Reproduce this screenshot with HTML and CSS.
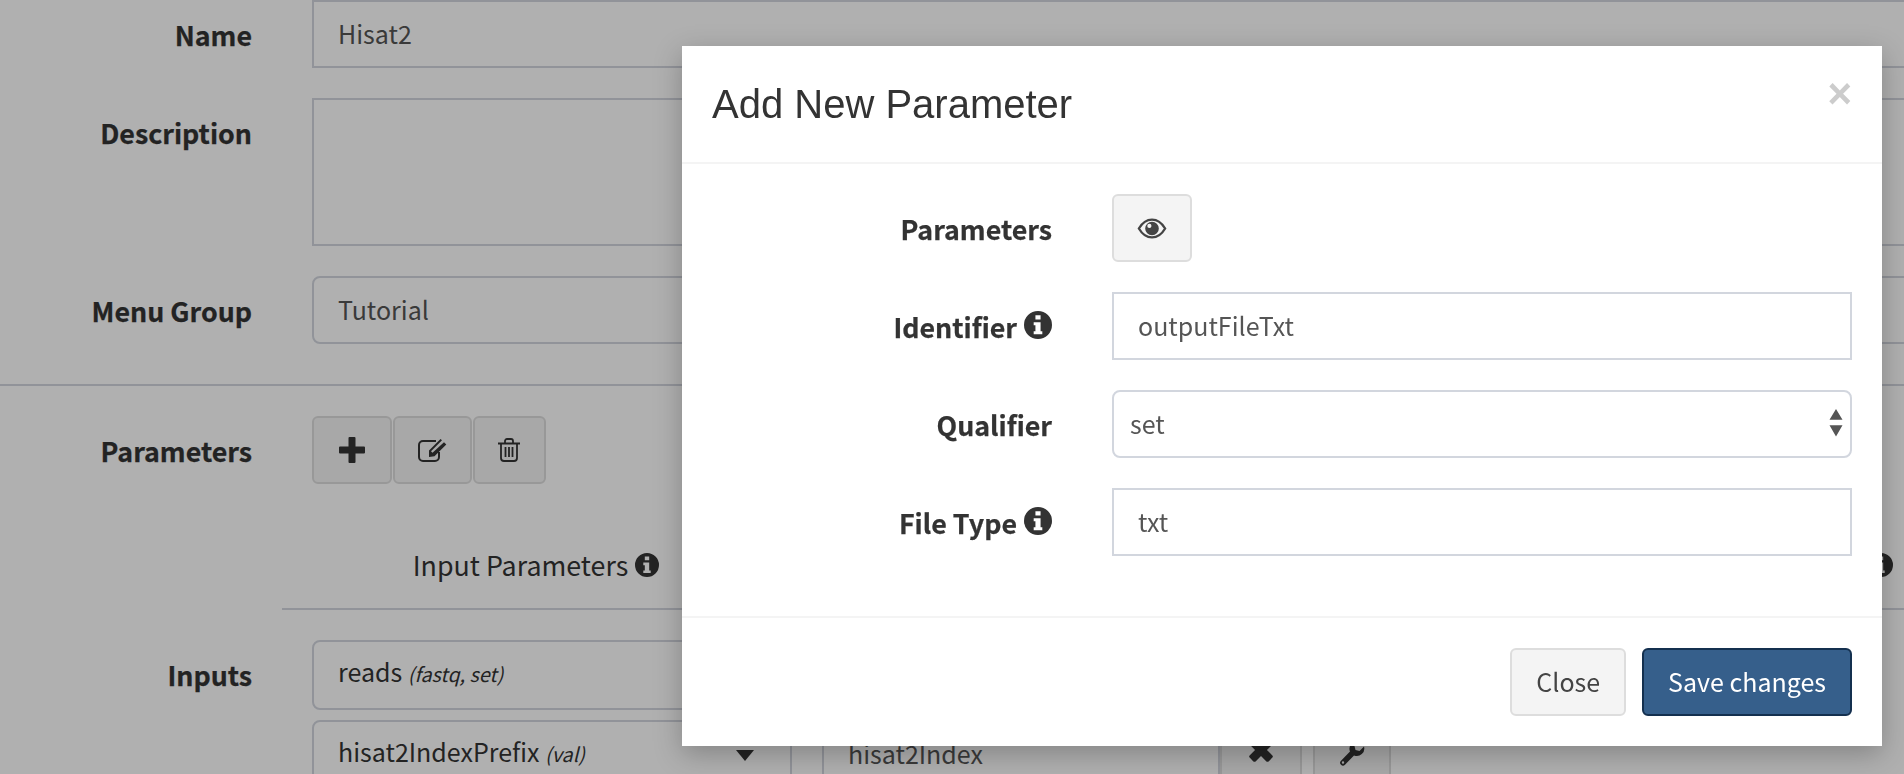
FILE: index.html
```html
<!DOCTYPE html>
<html lang="en">
<head>
<meta charset="utf-8">
<title>Add New Parameter</title>
<link rel="stylesheet" href="styles.css">
</head>
<body>
<svg class="defs" width="0" height="0" aria-hidden="true">
  <symbol id="info" viewBox="0 0 24 24">
    <path fill-rule="evenodd" fill="currentColor" d="M12 0a12 12 0 1 1 0 24a12 12 0 1 1 0-24zM9.800 3.600v3.600h4.400V3.600zM8.300 9.600v2.600h1.500v5.200H8.300V20h7.400v-2.600h-1.500V9.600z"/>
  </symbol>
</svg>

<form class="form">
  <div class="row">
    <label class="label">Name</label>
    <div class="field">Hisat2</div>
  </div>
  <div class="row">
    <label class="label">Description</label>
    <div class="field area"></div>
  </div>
  <div class="row">
    <label class="label">Menu Group</label>
    <div class="field round">Tutorial</div>
  </div>
  <hr class="rule">
  <div class="row">
    <label class="label">Parameters</label>
    <div class="tools">
      <button type="button" class="btn tool-a">
        <svg width="26" height="26" viewBox="0 0 26 26"><path fill="currentColor" d="M10.500 0h5a1 1 0 0 1 1 1v8.500H25a1 1 0 0 1 1 1v5a1 1 0 0 1-1 1h-8.500V25a1 1 0 0 1-1 1h-5a1 1 0 0 1-1-1v-8.500H1a1 1 0 0 1-1-1v-5a1 1 0 0 1 1-1h8.500V1a1 1 0 0 1 1-1z"/></svg>
      </button>
      <button type="button" class="btn tool-b">
        <svg width="29" height="24" viewBox="0 0 29 24"><path fill="none" stroke="currentColor" stroke-width="2" d="M21 14v5a4 4 0 0 1-4 4H5a4 4 0 0 1-4-4V7a4 4 0 0 1 4-4h13"/><path fill="currentColor" d="M11 12.500L22.500 1l1.500 1.300-11 11 1.500 1.500L26 4.300l2.300 2.100L16.500 18.300l-5.500.7z"/></svg>
      </button>
      <button type="button" class="btn tool-c">
        <svg class="trash" width="22" height="24" viewBox="0 0 22 24"><path fill="none" stroke="currentColor" stroke-width="1.800" d="M0 5.500h22M7 5.500V3a2 2 0 0 1 2-2h4a2 2 0 0 1 2 2v2.500M3 5.500V20a3 3 0 0 0 3 3h10a3 3 0 0 0 3-3V5.500M7.500 9v10M11 9v10M14.500 9v10"/></svg>
      </button>
    </div>
  </div>
  <div class="params-head">
    <div class="params-title">Input Parameters <svg class="info-sm"><use href="#info"/></svg></div>
    <div class="params-title out">Output Parameters <svg class="info-sm"><use href="#info"/></svg></div>
  </div>
  <div class="row">
    <label class="label">Inputs</label>
    <div class="io-list">
      <div class="io-row">
        <div class="field round pick">
          <span>reads <small class="hint">(fastq, set)</small></span>
          <i class="caret"></i>
        </div>
      </div>
      <div class="io-row">
        <div class="field round pick">
          <span>hisat2IndexPrefix <small class="hint">(val)</small></span>
          <i class="caret"></i>
        </div>
        <div class="field value">hisat2Index</div>
        <button type="button" class="btn remove">
          <svg class="x-icon" width="26" height="26" viewBox="0 0 24 24"><path fill="currentColor" d="M7 1.500L12 6.500l5-5a1.500 1.500 0 0 1 2 0l3.500 3.500a1.500 1.500 0 0 1 0 2L17.500 12l5 5a1.500 1.500 0 0 1 0 2L19 22.500a1.500 1.500 0 0 1-2 0l-5-5-5 5a1.500 1.500 0 0 1-2 0L1.500 19a1.500 1.500 0 0 1 0-2l5-5-5-5a1.500 1.500 0 0 1 0-2L5 1.500a1.500 1.500 0 0 1 2 0z"/></svg>
        </button>
        <button type="button" class="btn wrench">
          <svg width="26" height="26" viewBox="0 0 26 26"><path fill="currentColor" fill-rule="evenodd" d="M25 5.500a7.500 7.500 0 0 1-10 9L6 23.700a2.800 2.800 0 0 1-4-4L11 10.500a7.500 7.500 0 0 1 9-10L15.500 5l1 4 4 1zM4 20.300a1.200 1.200 0 1 0 0 2.400a1.200 1.200 0 1 0 0-2.400z"/></svg>
        </button>
      </div>
    </div>
  </div>
</form>

<div class="backdrop"></div>

<section class="modal">
  <header class="modal-head">
    <h4 class="modal-title">Add New Parameter</h4>
    <button type="button" class="close">×</button>
  </header>
  <div class="modal-body">
    <div class="m-row">
      <label class="label">Parameters</label>
      <button type="button" class="btn eye">
        <svg width="30" height="21" viewBox="0 0 28 20"><path fill="none" stroke="currentColor" stroke-width="2.200" d="M1.500 10C5 4 9 1.500 14 1.500S23 4 26.500 10C23 16 19 18.500 14 18.500S5 16 1.500 10z"/><path fill="currentColor" fill-rule="evenodd" d="M14 3.500a6.500 6.500 0 1 1 0 13a6.500 6.500 0 1 1 0-13zM11.500 5.500a2 2 0 1 0 0 4a2 2 0 1 0 0-4z"/></svg>
      </button>
    </div>
    <div class="m-row">
      <label class="label">Identifier<svg class="info"><use href="#info"/></svg></label>
      <div class="field">outputFileTxt</div>
    </div>
    <div class="m-row">
      <label class="label">Qualifier</label>
      <div class="field round native">
        <span>set</span>
        <svg width="14" height="28" viewBox="0 0 14 26" preserveAspectRatio="none"><path fill="#555" d="M7 0l6.500 10H.5zM.5 15h13L7 25.500z"/></svg>
      </div>
    </div>
    <div class="m-row">
      <label class="label">File Type<svg class="info"><use href="#info"/></svg></label>
      <div class="field">txt</div>
    </div>
  </div>
  <footer class="modal-foot">
    <button type="button" class="btn">Close</button>
    <button type="button" class="btn primary">Save changes</button>
  </footer>
</section>
</body>
</html>
```
FILE: styles.css
```css
* { box-sizing: border-box; }
html, body { margin: 0; height: 100%; }
body {
  overflow: hidden;
  background: #fff;
  color: #333;
  font: 26.8px/40px "Noto Sans CJK SC", "Noto Sans", sans-serif;
}
.defs { position: absolute; }

.form { width: 1980px; }
.row {
  display: grid;
  grid-template-columns: 252px 1fr;
  column-gap: 60px;
  margin-bottom: 30px;
}
.label {
  display: flex;
  justify-content: flex-end;
  align-items: flex-start;
  gap: 7px;
  padding-top: 14.5px;
  font-weight: 700;
  -webkit-text-stroke: .25px currentColor;
}
.info { width: 28px; height: 28px; margin-top: 4.5px; }
.field {
  display: flex;
  align-items: center;
  height: 68px;
  padding: 0 24px 3px;
  border: 2px solid #d2d6de;
  color: #555;
  background: #fff;
  font-size: 25px;
}
.area { height: 148px; }
.round { border-radius: 8px; }
.rule {
  margin: 40px 0 30px;
  border: 0;
  border-top: 2px solid #d2d6de;
}

.tools { display: flex; gap: 1px; }
.btn {
  display: inline-flex;
  align-items: center;
  justify-content: center;
  height: 68px;
  padding: 0 24px 2px;
  border: 2px solid #ddd;
  border-radius: 6px;
  background: #f4f4f4;
  color: #444;
  font: inherit;
  font-size: 25px;
}
.tools .btn { padding: 0; color: #333; }
.tool-a { width: 80px; }
.tool-b { width: 79px; }
.tool-c { width: 73px; }
.trash { margin-right: 2px; }

.params-head {
  display: flex;
  justify-content: space-between;
  margin: 61px 0 30px 282px;
  padding: 0 0 23px;
  border-bottom: 2px solid #d2d6de;
}
.params-title {
  width: 508px;
  text-align: center;
  white-space: nowrap;
}
.params-title.out { width: auto; padding-right: 87px; }
.info-sm { width: 24px; height: 24px; margin-left: 1px; vertical-align: -1px; }

.io-list { display: flex; flex-direction: column; gap: 10px; }
.io-row { display: flex; align-items: flex-start; }
.pick {
  justify-content: space-between;
  width: 480px;
  height: 70px;
  padding: 0 36px 5px 24px;
  color: #333;
}
.hint { font-size: 19.7px; font-style: italic; }
.caret {
  width: 0;
  height: 0;
  margin-top: 5px;
  border: solid transparent;
  border-width: 11px 9px 0;
  border-top-color: #333;
}
.value { width: 398px; margin-left: 30px; padding-left: 24px; }
.remove { width: 82px; padding: 0; border-radius: 0; color: #333; }
.x-icon { margin-bottom: 8px; }
.wrench { width: 78px; margin-left: 11px; padding: 0; color: #333; }

.backdrop {
  position: fixed;
  inset: 0;
  background: rgba(0, 0, 0, .31);
}
.modal {
  position: absolute;
  left: 682px;
  top: 46px;
  width: 1200px;
  background: #fff;
  box-shadow: 0 8px 26px rgba(0, 0, 0, .25);
}
.modal-head {
  display: flex;
  justify-content: space-between;
  align-items: flex-start;
  padding: 30px;
  border-bottom: 2px solid #f4f4f4;
}
.modal-title {
  margin: 0;
  font: 400 40px/56px "Liberation Sans", Arial, sans-serif;
  color: #333;
}
.close {
  padding: 0;
  border: 0;
  background: none;
  color: #ccc;
  font: 700 42px/35px "Liberation Sans", Arial, sans-serif;
}
.modal-body {
  display: flex;
  flex-direction: column;
  gap: 30px;
  padding: 30px 30px 60px;
}
.m-row {
  display: grid;
  grid-template-columns: 340px 740px;
  column-gap: 60px;
}
.eye { width: 80px; padding: 0; color: #444; }
.native { justify-content: space-between; padding: 0 7px 3px 16px; }
.modal-foot {
  display: flex;
  justify-content: flex-end;
  gap: 16px;
  padding: 30px;
  border-top: 2px solid #f4f4f4;
}
.primary {
  background: #365f8b;
  border-color: #14304f;
  color: #fff;
}
```
